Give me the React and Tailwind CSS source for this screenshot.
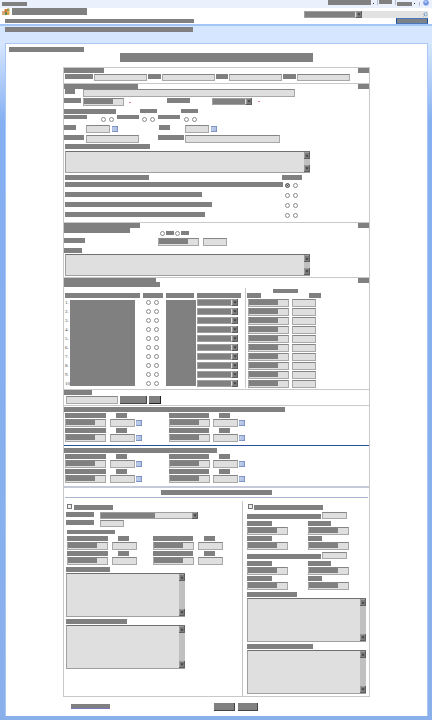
import React from 'react';
import clsx from 'clsx';
import { Search } from 'lucide-react';

const Bar = ({ as: Tag = 'span', className, ...rest }) => (
  <Tag className={clsx('block shrink-0 bg-[#808080]', className)} {...rest} />
);

const Label = ({ className, ...rest }) => (
  <Bar as="label" className={clsx('h-[5px]', className)} {...rest} />
);

// Text box, "fill" is the width of the value strip
const Field = ({ id, className, fill }) => (
  <div className={clsx('relative shrink-0', className)}>
    <input
      id={id}
      aria-label={id}
      type="text"
      className="block h-full w-full border border-[#a8a8a8] border-t-[#858585] bg-[#dfdfdf] text-[4px] outline-none"
    />
    {fill && <span className={clsx('pointer-events-none absolute bottom-0.5 left-px top-px bg-[#808080]', fill)} />}
  </div>
);

const Arrow = ({ up, className }) => (
  <svg viewBox="0 0 6 7" className={clsx('block h-[7px] w-[6px] shrink-0', className)} aria-hidden="true">
    <rect width="6" height="7" fill="#7c7c7c" />
    <path d="M0.5 7V0.5H6" fill="none" stroke="#9c9c9c" strokeWidth="1" />
    <path d="M5.5 0V6.5H0" fill="none" stroke="#606060" strokeWidth="1" />
    <path d={up ? 'M1.5 4.5h3L3 2.5z' : 'M1.5 2.5h3L3 4.5z'} fill="#333" />
  </svg>
);

const Select = ({ id, className, fill = 'right-[7px]' }) => (
  <div className={clsx('relative h-[7px] shrink-0', className)}>
    <select
      id={id}
      aria-label={id}
      className="block h-full w-full appearance-none border border-[#a0a0a0] bg-[#dfdfdf] text-[4px] outline-none"
    />
    <span className={clsx('pointer-events-none absolute inset-y-px left-px bg-[#808080]', fill)} />
    <Arrow className="pointer-events-none absolute right-0 top-0" />
  </div>
);

const Radio = ({ name, checked, className }) => (
  <input
    type="radio"
    name={name}
    aria-label={name}
    defaultChecked={checked}
    className={clsx(
      'block size-[5px] shrink-0 appearance-none rounded-full border border-[#8a8a8a] bg-white',
      'checked:border-[#666] checked:bg-[#222] checked:shadow-[inset_0_0_0_1px_#ccc]',
      className
    )}
  />
);

const TextArea = ({ id, className }) => (
  <div className={clsx('flex border border-[#a0a0a0] border-t-[#6f6f6f] border-r-0', className)}>
    <textarea
      id={id}
      aria-label={id}
      className="block h-full min-w-0 flex-1 resize-none bg-[#dfdfe0] text-[4px] outline-none"
    />
    <div className="flex w-[6px] flex-col justify-between bg-[#c0c0c0]">
      <Arrow up />
      <Arrow />
    </div>
  </div>
);

const CalendarIcon = () => (
  <svg viewBox="0 0 6 6" className="mt-px block size-[6px] shrink-0" aria-hidden="true">
    <rect width="6" height="6" fill="#a9bbdf" />
    <rect x="1" y="1.5" width="3.5" height="3" fill="#d3def4" />
    <path d="M0 0.5h6M5.5 0v6M0 5.5h6" stroke="#6e86bb" strokeWidth="0.7" />
    <path d="M1 3h4M3 1.5v4" stroke="#8fa5d4" strokeWidth="0.5" />
  </svg>
);

const SectionHeader = ({ width, height }) => (
  <div className={clsx('flex items-start justify-between', height)}>
    <Bar className={clsx('h-[5px]', width)} />
    <Bar className="h-[5px] w-[11px]" />
  </div>
);

const DateRows = ({ id, icons, columns }) => (
  <div>
    {[1, 2].map((row) => (
      <div key={row} className={clsx('grid h-[15px] grid-rows-[6px_9px] items-start', columns)}>
        <Label htmlFor={`${id}-${row}-from`} className="w-[41px]" />
        <Label htmlFor={`${id}-${row}-from-time`} className="ml-1.5 w-[11px]" />
        <Label htmlFor={`${id}-${row}-to`} className="w-[40px]" />
        <Label htmlFor={`${id}-${row}-to-time`} className="ml-1.5 w-[11px]" />
        <Field id={`${id}-${row}-from`} className="h-2 w-[41px]" fill="w-[29px]" />
        <div className="flex gap-px">
          <Field id={`${id}-${row}-from-time`} className="h-2 w-[25px]" />
          {icons && <CalendarIcon />}
        </div>
        <Field id={`${id}-${row}-to`} className="h-2 w-[41px]" fill="w-[29px]" />
        <div className="flex gap-px">
          <Field id={`${id}-${row}-to-time`} className="h-2 w-[25px]" />
          {icons && <CalendarIcon />}
        </div>
      </div>
    ))}
  </div>
);

const PairRows = ({ id }) => (
  <div>
    {[1, 2].map((row) => (
      <div key={row} className="grid h-[15px] grid-cols-[61px_41px] grid-rows-[6px_9px] items-start">
        <Label htmlFor={`${id}-${row}-a`} className="w-[25px]" />
        <Label htmlFor={`${id}-${row}-b`} className={row === 1 ? 'w-[23px]' : 'w-[14px]'} />
        <Field id={`${id}-${row}-a`} className="h-2 w-[41px]" fill="w-[29px]" />
        <Field id={`${id}-${row}-b`} className="h-2 w-[41px]" fill="w-[29px]" />
      </div>
    ))}
  </div>
);

const Header = () => (
  <header>
    <div className="flex h-2 items-start justify-between bg-[#eaf1fd] pl-0.5 pr-[3px]">
      <Bar className="mt-0.5 h-1 w-[25px]" />
      <div className="flex items-start">
        <Bar as="button" type="button" aria-label="Account" className="h-[5px] w-[43px]" />
        <span className="ml-0.5 mt-[3px] size-px bg-[#333]" />
        <span className="ml-[3px] h-[5px] w-px bg-[#b5bccb]" />
        <Bar as="a" href="#" aria-label="Site" className="ml-px h-1 w-[13px]" />
        <span className="ml-[3px] h-[5px] w-px bg-[#b5bccb]" />
        <Bar as="a" href="#" aria-label="Links" className="ml-px mt-0.5 h-1 w-[15px]" />
        <span className="ml-0.5 mt-[3px] size-px bg-[#333]" />
        <span className="ml-1 mt-0.5 h-[4px] w-px bg-[#b5bccb]" />
        <svg viewBox="0 0 6 6" className="ml-[3px] size-[6px]" aria-hidden="true">
          <circle cx="3" cy="2.8" r="2.8" fill="#7396e4" />
          <circle cx="2.7" cy="1.8" r="1.3" fill="#aec8f6" />
        </svg>
      </div>
    </div>
    <div className="flex h-2.5 justify-between bg-white pl-0.5 pr-1">
      <div className="flex gap-0.5">
        <svg viewBox="0 0 8 8" className="size-2" aria-hidden="true">
          <rect x="0" y="3" width="3" height="4" fill="#d8a878" />
          <rect x="2.5" y="1" width="2.5" height="3" fill="#d9763f" />
          <rect x="5" y="0.5" width="2.5" height="3" fill="#9aa04d" />
          <rect x="3" y="4" width="2" height="3" fill="#5b8d55" />
          <rect x="5" y="3.5" width="2.5" height="3.5" fill="#e3a33c" />
        </svg>
        <Bar as="h1" className="h-[7px] w-[75px]" />
      </div>
      <div className="flex pt-[3px]">
        <Select id="search-scope" className="w-[58px]" />
        <div className="relative">
          <input
            type="search"
            aria-label="Search"
            className="block h-[7px] w-[66px] bg-[#e2e2e3] text-[4px] outline-none"
          />
          <Search className="absolute right-0 top-px size-[5px] -scale-x-100 text-[#5c93c4]" strokeWidth={3} />
        </div>
      </div>
    </div>
    <div className="flex h-[6px] items-start justify-between bg-white pl-[5px] pr-1">
      <Bar className="mt-px h-[4px] w-[189px]" />
      <button
        type="button"
        aria-label="Site actions"
        className="block h-[6px] w-[32px] border border-[#4a77b8] border-x-[#1d4f9c] bg-[#7d8288]"
      />
    </div>
    <div className="h-0.5 bg-[#a3c6f6]" />
    <div className="h-[17px] bg-[#d6e6ff] pl-[5px] pt-px">
      <Bar className="h-[5px] w-[188px]" />
    </div>
  </header>
);

const ContactSection = () => (
  <section className="border-b border-[#c9c9c9]">
    <SectionHeader width="w-[40px]" height="h-[6px]" />
    <div className="flex h-[9px] items-start gap-px pl-px">
      <Label htmlFor="ref-1" className="w-[28px]" />
      <Field id="ref-1" className="h-[7px] w-[53px]" />
      <Label htmlFor="ref-2" className="w-[13px]" />
      <Field id="ref-2" className="h-[7px] w-[53px]" />
      <Label htmlFor="ref-3" className="w-[12px]" />
      <Field id="ref-3" className="h-[7px] w-[53px]" />
      <Label htmlFor="ref-4" className="w-[13px]" />
      <Field id="ref-4" className="h-[7px] w-[53px]" />
    </div>
  </section>
);

const questions = ['w-[218px]', 'w-[137px]', 'w-[147px]', 'w-[140px]'];

const DetailsSection = () => (
  <section className="border-b border-[#c9c9c9]">
    <SectionHeader width="w-[74px]" height="h-[5px]" />
    <div className="grid h-[9px] grid-cols-[19px_212px] items-start">
      <Label htmlFor="name" className="ml-px w-[10px]" />
      <Field id="name" className="h-2" />
    </div>
    <div className="grid h-[11px] grid-cols-[19px_46px_38px_45px_46px_2px] items-start">
      <Label htmlFor="date" className="w-[17px]" />
      <Field id="date" className="h-2 w-[41px]" fill="w-[29px]" />
      <span className="mt-1 h-px w-0.5 bg-[#df8490]" />
      <Label htmlFor="kind" className="w-[23px]" />
      <Select id="kind" className="w-[40px]" />
      <span className="mt-[3px] h-px w-0.5 bg-[#df8490]" />
    </div>
    <div className="grid h-[6px] grid-cols-[76px_41px_17px] items-start">
      <Bar className="h-[5px] w-[52px]" />
      <Bar className="h-1 w-[17px]" />
      <Bar className="h-1 w-[17px]" />
    </div>
    <div className="grid h-2.5 grid-cols-[37px_16px_25px_16px_26px_16px] items-start">
      <Bar className="h-1 w-[23px]" />
      <div className="mt-0.5 flex gap-[3px]"><Radio name="option-a" /><Radio name="option-a" /></div>
      <Bar className="h-1 w-[22px]" />
      <div className="mt-0.5 flex gap-[3px]"><Radio name="option-b" /><Radio name="option-b" /></div>
      <Bar className="h-1 w-[22px]" />
      <div className="mt-0.5 flex gap-[3px]"><Radio name="option-c" /><Radio name="option-c" /></div>
    </div>
    <div className="grid h-2.5 grid-cols-[22px_73px_26px_33px] items-start">
      <Label htmlFor="start" className="w-[12px]" />
      <div className="flex gap-0.5"><Field id="start" className="h-2 w-[24px]" /><CalendarIcon /></div>
      <Label htmlFor="end" className="w-[11px]" />
      <div className="flex gap-0.5"><Field id="end" className="h-2 w-[24px]" /><CalendarIcon /></div>
    </div>
    <div className="grid h-[9px] grid-cols-[22px_72px_27px_95px] items-start">
      <Label htmlFor="place" className="w-[20px]" />
      <Field id="place" className="h-2 w-[53px]" />
      <Label htmlFor="address" className="w-[26px]" />
      <Field id="address" className="h-2" />
    </div>
    <div className="h-[7px] pl-px">
      <Label htmlFor="summary" className="h-1 w-[85px]" />
    </div>
    <div className="h-6 pl-px">
      <TextArea id="summary" className="h-[22px] w-[245px]" />
    </div>
    <div className="grid h-[7px] grid-cols-[217px_20px] items-start pl-px">
      <Bar className="h-[5px] w-[84px]" />
      <Bar className="h-[5px]" />
    </div>
    {questions.map((width, i) => (
      <div key={width} className="grid h-2.5 grid-cols-[220px_13px] items-start pl-px">
        <Bar className={clsx('h-[5px]', width)} />
        <div className="mt-px flex gap-[3px]">
          <Radio name={`question-${i}`} checked={i === 0} />
          <Radio name={`question-${i}`} />
        </div>
      </div>
    ))}
  </section>
);

const NotesSection = () => (
  <section className="border-b border-[#c9c9c9]">
    <SectionHeader width="w-[76px]" height="h-[5px]" />
    <div className="grid h-2.5 grid-cols-[96px_15px_30px] items-center">
      <Bar className="h-[5px] w-[66px] self-start" />
      <div className="flex items-center gap-px"><Radio name="notes" /><Bar className="h-1 w-[8px]" /></div>
      <div className="flex items-center gap-px"><Radio name="notes" /><Bar className="h-1 w-[8px]" /></div>
    </div>
    <div className="grid h-2.5 grid-cols-[94px_45px_24px] items-start">
      <Label htmlFor="amount" className="w-[21px]" />
      <Field id="amount" className="h-2 w-[41px]" fill="w-[29px]" />
      <Field id="unit" className="h-2" />
    </div>
    <div className="h-[6px]">
      <Label htmlFor="notes-text" className="h-1 w-[18px]" />
    </div>
    <div className="h-[23px] pl-px">
      <TextArea id="notes-text" className="h-[22px] w-[245px]" />
    </div>
  </section>
);

const ItemsSection = () => (
  <section className="border-b border-[#c9c9c9] pb-px">
    <SectionHeader width="w-[92px]" height="h-[4px]" />
    <div className="h-[6px]"><Bar className="h-[5px] w-[96px]" /></div>
    <table className="w-full table-fixed border-collapse">
      <colgroup>
        <col className="w-[6px]" />
        <col className="w-[73px]" />
        <col className="w-[23px]" />
        <col className="w-[31px]" />
        <col className="w-[48px]" />
        <col className="w-[47px]" />
        <col />
      </colgroup>
      <thead>
        <tr className="h-[5px]">
          <th colSpan={5} className="p-0" />
          <th colSpan={2} className="border-l border-[#c9c9c9] p-0"><Bar className="ml-[27px] h-1 w-[25px]" /></th>
        </tr>
        <tr className="h-[5px]">
          <th colSpan={2} className="p-0"><Bar className="ml-px h-[5px] w-[75px]" /></th>
          <th className="p-0"><Bar className="h-[5px] w-[20px]" /></th>
          <th className="p-0"><Bar className="h-[5px] w-[28px]" /></th>
          <th className="p-0"><Bar className="h-[5px] w-[44px]" /></th>
          <th className="border-l border-[#c9c9c9] p-0"><Bar className="ml-px h-[5px] w-[14px]" /></th>
          <th className="p-0"><Bar className="ml-[17px] h-[5px] w-[12px]" /></th>
        </tr>
      </thead>
      <tbody>
        {Array.from({ length: 10 }, (_, i) => (
          <tr key={i} className="h-[9px]">
            <td className="overflow-hidden whitespace-nowrap p-0 pl-px font-['Liberation_Serif',serif] text-[5px] leading-[6px] text-[#444]">
              {i === 9 ? '10' : `${i + 1}.`}
            </td>
            {i === 0 && <td rowSpan={10} className="p-0"><Bar className="h-[86px] w-[65px]" /></td>}
            <td className="p-0">
              <div className="flex gap-[3px] pl-[3px]">
                <Radio name={`item-${i}`} />
                <Radio name={`item-${i}`} />
              </div>
            </td>
            {i === 0 && <td rowSpan={10} className="p-0"><Bar className="h-[86px] w-[30px]" /></td>}
            <td className="p-0"><Select id={`item-status-${i}`} className="w-[41px]" /></td>
            <td className="border-l border-[#c9c9c9] p-0">
              <Field id={`item-date-${i}`} className="ml-0.5 h-2 w-[41px]" fill="w-[29px]" />
            </td>
            <td className="p-0"><Field id={`item-time-${i}`} className="h-2 w-[24px]" /></td>
          </tr>
        ))}
      </tbody>
    </table>
  </section>
);

const UploadSection = () => (
  <section className="border-b border-[#c9c9c9]">
    <div className="h-[6px]"><Label htmlFor="file" className="h-1 w-[28px]" /></div>
    <div className="flex h-[9px] items-start gap-0.5 pl-0.5">
      <Field id="file" className="h-2 w-[52px]" />
      <Bar as="button" type="button" aria-label="Browse" className="h-2 w-[27px] border-b border-r border-[#444]" />
      <Bar as="button" type="button" aria-label="Add" className="h-2 w-[12px] border-b border-r border-[#222]" />
    </div>
  </section>
);

const LeftColumn = () => (
  <div className="w-[178px] pl-0.5 pt-[3px]">
    <div className="flex h-2 items-start gap-0.5 pl-px">
      <input id="left-on" type="checkbox" className="block size-[5px] appearance-none border border-[#777] bg-[#eee]" />
      <Label htmlFor="left-on" className="mt-px w-[39px]" />
    </div>
    <div className="grid h-2 grid-cols-[34px_98px] items-start">
      <Label htmlFor="left-kind" className="w-[28px]" />
      <Select id="left-kind" fill="w-[54px]" />
    </div>
    <div className="grid h-2.5 grid-cols-[34px_24px] items-start">
      <Label htmlFor="left-count" className="w-[28px]" />
      <Field id="left-count" className="h-[7px]" />
    </div>
    <div className="h-[6px] pl-px"><Bar className="h-1 w-[48px]" /></div>
    <div className="pb-px pl-px">
      <DateRows id="left" columns="grid-cols-[45px_41px_45px_25px]" />
    </div>
    <div className="h-[6px]"><Label htmlFor="left-text-1" className="h-1 w-[44px]" /></div>
    <TextArea id="left-text-1" className="h-[44px] w-[119px]" />
    <div className="h-2 pt-0.5"><Label htmlFor="left-text-2" className="h-1 w-[61px]" /></div>
    <TextArea id="left-text-2" className="h-[44px] w-[119px]" />
  </div>
);

const RightColumn = () => (
  <div className="flex-1 border-l border-[#c4c4c8] pb-0.5 pl-1 pt-[3px]">
    <div className="flex h-2 items-start gap-px pl-px">
      <input id="right-on" type="checkbox" className="block size-[5px] appearance-none border border-[#777] bg-[#eee]" />
      <Label htmlFor="right-on" className="mt-px w-[69px]" />
    </div>
    <div className="flex h-[9px] items-start gap-px">
      <Label htmlFor="right-1" className="mt-0.5 h-1 w-[74px]" />
      <Field id="right-1" className="h-[7px] w-[25px]" />
    </div>
    <PairRows id="right-first" />
    <div className="flex h-2.5 items-start gap-px pt-px">
      <Label htmlFor="right-2" className="mt-0.5 h-1 w-[74px]" />
      <Field id="right-2" className="h-[7px] w-[25px]" />
    </div>
    <PairRows id="right-second" />
    <div className="h-[7px] pt-px"><Label htmlFor="right-text-1" className="w-[50px]" /></div>
    <TextArea id="right-text-1" className="h-[44px] w-[119px]" />
    <div className="h-2 pt-0.5"><Label htmlFor="right-text-2" className="w-[66px]" /></div>
    <TextArea id="right-text-2" className="h-[44px] w-[119px]" />
  </div>
);

const App = () => {
  return (
    <div className="bg-[#8ab0ec] pb-1 font-['Liberation_Sans',sans-serif]">
      <Header />
      <div className="bg-[linear-gradient(to_bottom,#d6e6ff,#84aff2_80px,#8ab0ec)] pl-[5px] pr-1">
        <main className="border border-b-0 border-[#a9c8f5] bg-white">
          <div className="pl-[3px] pt-[3px]"><Bar className="h-[5px] w-[75px]" /></div>
          <Bar as="h2" className="mx-auto mb-[5px] mt-px h-[9px] w-[193px]" />

          <form className="mx-auto w-[307px]" onSubmit={(e) => e.preventDefault()}>
            <div className="border border-[#c9c9c9]">
              <ContactSection />
              <DetailsSection />
              <NotesSection />
              <ItemsSection />
              <UploadSection />

              <section className="border-b border-[#2a529c] pb-0.5">
                <div className="h-[7px] pt-px"><Bar className="h-[5px] w-[221px]" /></div>
                <div className="pl-px"><DateRows id="plan" icons columns="grid-cols-[45px_59px_44px_33px]" /></div>
              </section>
              <section className="border-b-2 border-[#c6c9d8] pb-0.5 pt-0.5">
                <div className="h-[6px]"><Bar className="h-[5px] w-[153px]" /></div>
                <div className="pl-px"><DateRows id="actual" icons columns="grid-cols-[45px_59px_44px_33px]" /></div>
              </section>

              <div className="mx-px flex h-2.5 items-center justify-center border-b border-[#a9b4d0]">
                <Bar as="h3" className="h-[5px] w-[111px]" />
              </div>
              <div className="flex pt-[3px]">
                <LeftColumn />
                <RightColumn />
              </div>
            </div>

            <div className="flex items-start pb-[5px] pl-2 pt-[6px]">
              <Bar as="a" href="#" aria-label="Back" className="mt-px h-[5px] w-[39px] border-b border-[#7773c0]" />
              <div className="ml-[104px] flex gap-[3px]">
                <Bar as="button" type="submit" aria-label="Save" className="h-2 w-[21px] border-b border-r border-[#444]" />
                <Bar as="button" type="button" aria-label="Cancel" className="h-2 w-[20px] border-b border-r border-[#444]" />
              </div>
            </div>
          </form>
        </main>
      </div>
    </div>
  );
};

export default App;
